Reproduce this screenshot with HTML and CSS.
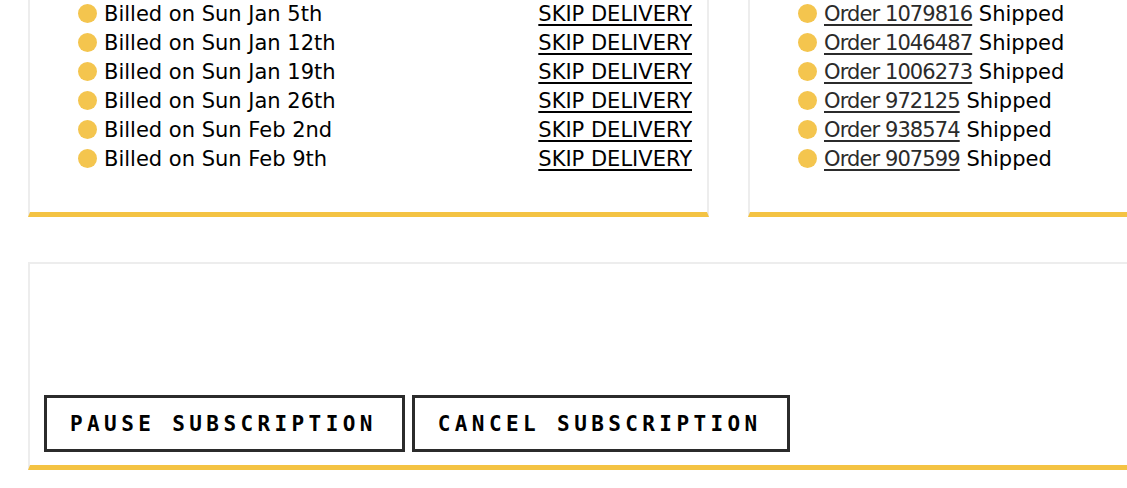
FILE: index.html
```html
<!DOCTYPE html>
<html lang="en">
<head>
    <meta charset="UTF-8" />
    <meta name="viewport" content="width=device-width, initial-scale=1" />
    <title>Subscription</title>
    <link rel="stylesheet" href="styles.css">
</head>
<body>
    <main class="cuenta">
        <div class="paneles">
            <section class="panel">
                <ul class="lista">
                    <li class="fila"><span class="punto"></span><span class="texto">Billed on Sun Jan 5th</span><a href="#" class="saltar">SKIP DELIVERY</a></li>
                    <li class="fila"><span class="punto"></span><span class="texto">Billed on Sun Jan 12th</span><a href="#" class="saltar">SKIP DELIVERY</a></li>
                    <li class="fila"><span class="punto"></span><span class="texto">Billed on Sun Jan 19th</span><a href="#" class="saltar">SKIP DELIVERY</a></li>
                    <li class="fila"><span class="punto"></span><span class="texto">Billed on Sun Jan 26th</span><a href="#" class="saltar">SKIP DELIVERY</a></li>
                    <li class="fila"><span class="punto"></span><span class="texto">Billed on Sun Feb 2nd</span><a href="#" class="saltar">SKIP DELIVERY</a></li>
                    <li class="fila"><span class="punto"></span><span class="texto">Billed on Sun Feb 9th</span><a href="#" class="saltar">SKIP DELIVERY</a></li>
                </ul>
            </section>

            <section class="panel">
                <ul class="lista">
                    <li class="fila"><span class="punto"></span><span class="texto"><a href="#" class="pedido">Order 1079816</a> Shipped</span></li>
                    <li class="fila"><span class="punto"></span><span class="texto"><a href="#" class="pedido">Order 1046487</a> Shipped</span></li>
                    <li class="fila"><span class="punto"></span><span class="texto"><a href="#" class="pedido">Order 1006273</a> Shipped</span></li>
                    <li class="fila"><span class="punto"></span><span class="texto"><a href="#" class="pedido">Order 972125</a> Shipped</span></li>
                    <li class="fila"><span class="punto"></span><span class="texto"><a href="#" class="pedido">Order 938574</a> Shipped</span></li>
                    <li class="fila"><span class="punto"></span><span class="texto"><a href="#" class="pedido">Order 907599</a> Shipped</span></li>
                </ul>
            </section>
        </div>

        <section class="acciones">
            <button class="boton">PAUSE SUBSCRIPTION</button>
            <button class="boton">CANCEL SUBSCRIPTION</button>
        </section>
    </main>
</body>
</html>
```

FILE: styles.css
```css
html,
body {
    margin: 0;
    overflow: hidden;
    background-color: #fff;
}

body {
    font-family: 'DejaVu Sans', Verdana, sans-serif;
    color: #000;
}

.cuenta {
    width: 1401px;
    padding-left: 28px;
}

.paneles {
    display: grid;
    grid-template-columns: 681px 681px;
    column-gap: 39px;
}

.panel {
    border: 2px solid #ededed;
    border-top: 0;
    border-bottom: 5px solid #f4c343;
    padding: 0 15px 38px 48px;
}

.lista {
    list-style: none;
    margin: 0;
    padding: 0;
    font-size: 21px;
    line-height: 29px;
}

.fila {
    display: flex;
    align-items: center;
}

.punto {
    width: 19px;
    height: 19px;
    border-radius: 50%;
    background-color: #f4c54e;
    margin-right: 7px;
    margin-top: -2px;
    flex-shrink: 0;
}

.texto {
    flex: 1;
    white-space: nowrap;
}

.saltar {
    color: #000;
    text-decoration: underline;
    text-decoration-thickness: 2px;
    text-underline-offset: 3px;
}

.pedido {
    color: #2b2b2b;
    letter-spacing: -0.9px;
    text-decoration: underline;
    text-decoration-thickness: 2px;
    text-underline-offset: 3px;
}

.acciones {
    margin-top: 45px;
    border: 2px solid #ededed;
    border-bottom: 5px solid #f4c343;
    padding: 131px 14px 13px 14px;
    display: flex;
    gap: 7px;
}

.boton {
    height: 57px;
    padding: 0 25px 0 23px;
    background-color: #fff;
    border: 3px solid #2b2b2b;
    font-family: 'DejaVu Sans Mono', 'Liberation Mono', monospace;
    font-weight: bold;
    font-size: 21px;
    letter-spacing: 4.4px;
    color: #000;
    cursor: pointer;
}
```
